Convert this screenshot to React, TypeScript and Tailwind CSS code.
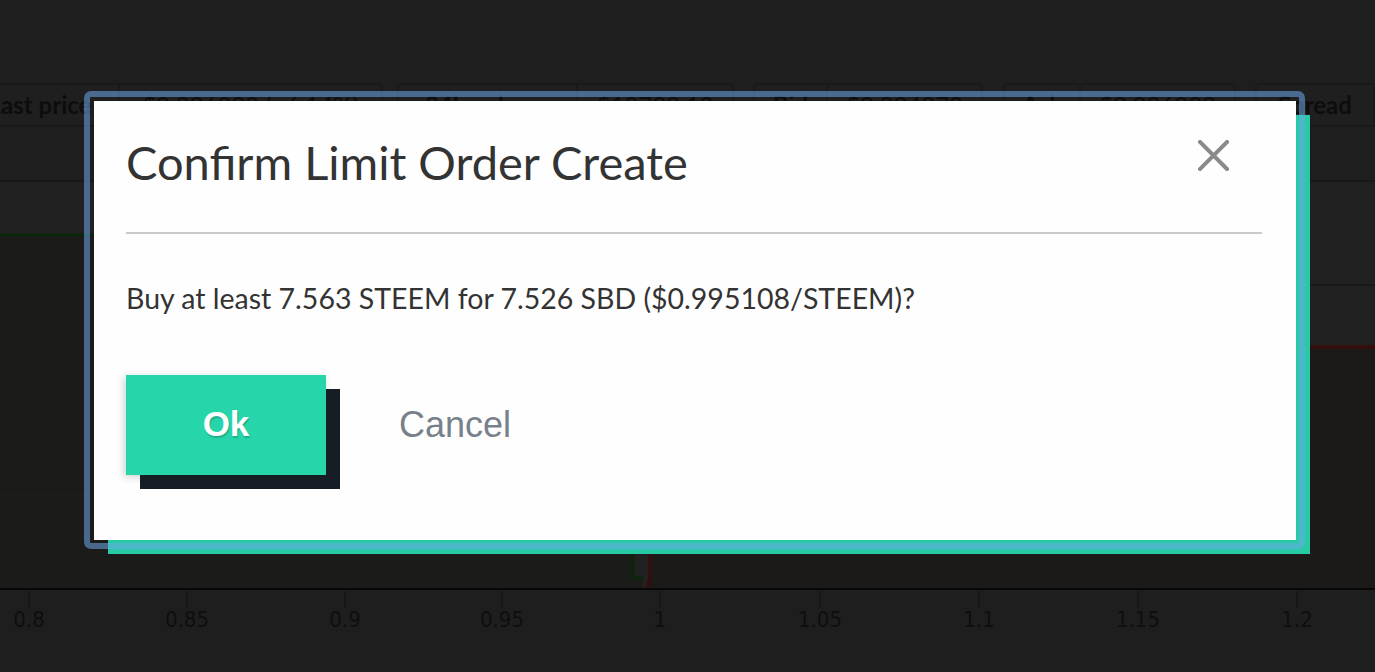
const tickerBoxes = [
  { ml: "ml-[-40px]", labelW: "w-[158px]", valueW: "w-[261px]", label: "Last price", value: "$0.996000 (+6.14%)" },
  { ml: "ml-[14px]", labelW: "w-[179px]", valueW: "w-[154px]", label: "24h volume", value: "$12729.12" },
  { ml: "ml-[19px]", labelW: "w-[73px]", valueW: "w-[153px]", label: "Bid", value: "$0.994873" },
  { ml: "ml-[20px]", labelW: "w-[76px]", valueW: "w-[153px]", label: "Ask", value: "$0.996000" },
  { ml: "ml-[19px]", labelW: "w-[118px]", valueW: "w-[160px]", label: "Spread", value: "0.113%" },
];

const axisTicks = [
  { x: 29, label: "0.8" },
  { x: 187, label: "0.85" },
  { x: 345, label: "0.9" },
  { x: 502, label: "0.95" },
  { x: 660, label: "1" },
  { x: 820, label: "1.05" },
  { x: 979, label: "1.1" },
  { x: 1138, label: "1.15" },
  { x: 1297, label: "1.2" },
];

function TickerRow() {
  return (
    <div className="flex h-[44px] text-[24px] font-bold text-[#0d0d0d] leading-none">
      {tickerBoxes.map((b) => (
        <div
          key={b.label}
          className={`${b.ml} flex shrink-0 border-2 border-[#191919] rounded-[5px] bg-[#1f1f1f]`}
        >
          <div className={`${b.labelW} flex items-center justify-center border-r-2 border-[#191919]`}>
            {b.label}
          </div>
          <div className={`${b.valueW} flex items-center justify-center font-normal`}>{b.value}</div>
        </div>
      ))}
    </div>
  );
}

function DepthChart() {
  return (
    <svg width="1375" height="410" className="block">
      <rect x="0" y="0" width="1375" height="410" fill="#212121" />
      {/* bids */}
      <path d="M0 55 L633 55 L633 398 L643 398 L643 408 L0 408 Z" fill="#1b1c1a" />
      {/* asks */}
      <path d="M652 167 L1375 167 L1375 408 L648 408 Z" fill="#1c1a19" />
      {[0, 104, 206, 308].map((y) => (
        <line key={y} x1="0" x2="1375" y1={y + 1} y2={y + 1} stroke="#191919" strokeWidth="2" />
      ))}
      <path d="M0 55 L633 55 L633 398 L643 398" fill="none" stroke="#0b260b" strokeWidth="3" />
      <path d="M1375 167 L652 167 L650 398 L647 408" fill="none" stroke="#3a0b0b" strokeWidth="3" />
      <line x1="0" x2="1375" y1="409" y2="409" stroke="#080808" strokeWidth="2" />
    </svg>
  );
}

function Axis() {
  return (
    <svg width="1375" height="82" className="block">
      {axisTicks.map((t) => (
        <g key={t.label}>
          <line x1={t.x} x2={t.x} y1="1" y2="18" stroke="#161616" strokeWidth="1.5" />
          <text
            x={t.x}
            y="37"
            textAnchor="middle"
            fill="#0e0e0e"
            fontSize="22"
            fontFamily="'DejaVu Sans Condensed', 'DejaVu Sans', sans-serif"
          >
            {t.label}
          </text>
        </g>
      ))}
    </svg>
  );
}

function CloseIcon() {
  return (
    <svg width="31" height="31" viewBox="0 0 31 31" className="block">
      <path d="M2 2 L29 29 M29 2 L2 29" stroke="#8a8a8a" strokeWidth="4" strokeLinecap="square" />
    </svg>
  );
}

function ConfirmDialog() {
  return (
    <>
      <div className="absolute left-[94px] top-[101px] w-[1202px] h-[439px] bg-[#fefefe] shadow-[14px_14px_0_0_#28caa5] pl-[32px] pr-[34px]">
        <div className="flex items-start justify-between pt-[33px]">
          <h2 className="text-[47px] leading-[1.2] text-[#333] font-normal">Confirm Limit Order Create</h2>
          <button className="mt-[6px] mr-[33px]">
            <CloseIcon />
          </button>
        </div>
        <div className="mt-[42px] h-[2px] bg-[#cacaca]" />
        <p className="mt-[47px] text-[28.5px] leading-[1.2] text-[#333]">
          Buy at least 7.563 STEEM for 7.526 SBD ($0.995108/STEEM)?
        </p>
        <div className="mt-[59px] flex items-center font-['Liberation_Sans',Arial,sans-serif]">
          <button className="w-[200px] h-[100px] bg-[#26d5aa] text-white text-[35px] font-bold [text-shadow:1px_2px_1px_rgba(0,0,0,0.18)] shadow-[14px_14px_0_0_#171d24,-2px_2px_8px_rgba(0,0,0,0.18)]">
            Ok
          </button>
          <button className="ml-[73px] text-[36px] text-[#78818b]">Cancel</button>
        </div>
      </div>
      <div className="absolute left-[84px] top-[91px] w-[1221px] h-[458px] border-[6px] border-[rgba(110,170,235,0.55)] rounded-[7px] pointer-events-none" />
    </>
  );
}

export default function App() {
  return (
    <div className="relative w-[1375px] h-[672px] overflow-hidden bg-[#1e1e1e] font-['Lato',sans-serif]">
      <div className="h-[83px]" />
      <TickerRow />
      <div className="h-[53px]" />
      <DepthChart />
      <Axis />
      <ConfirmDialog />
    </div>
  );
}
